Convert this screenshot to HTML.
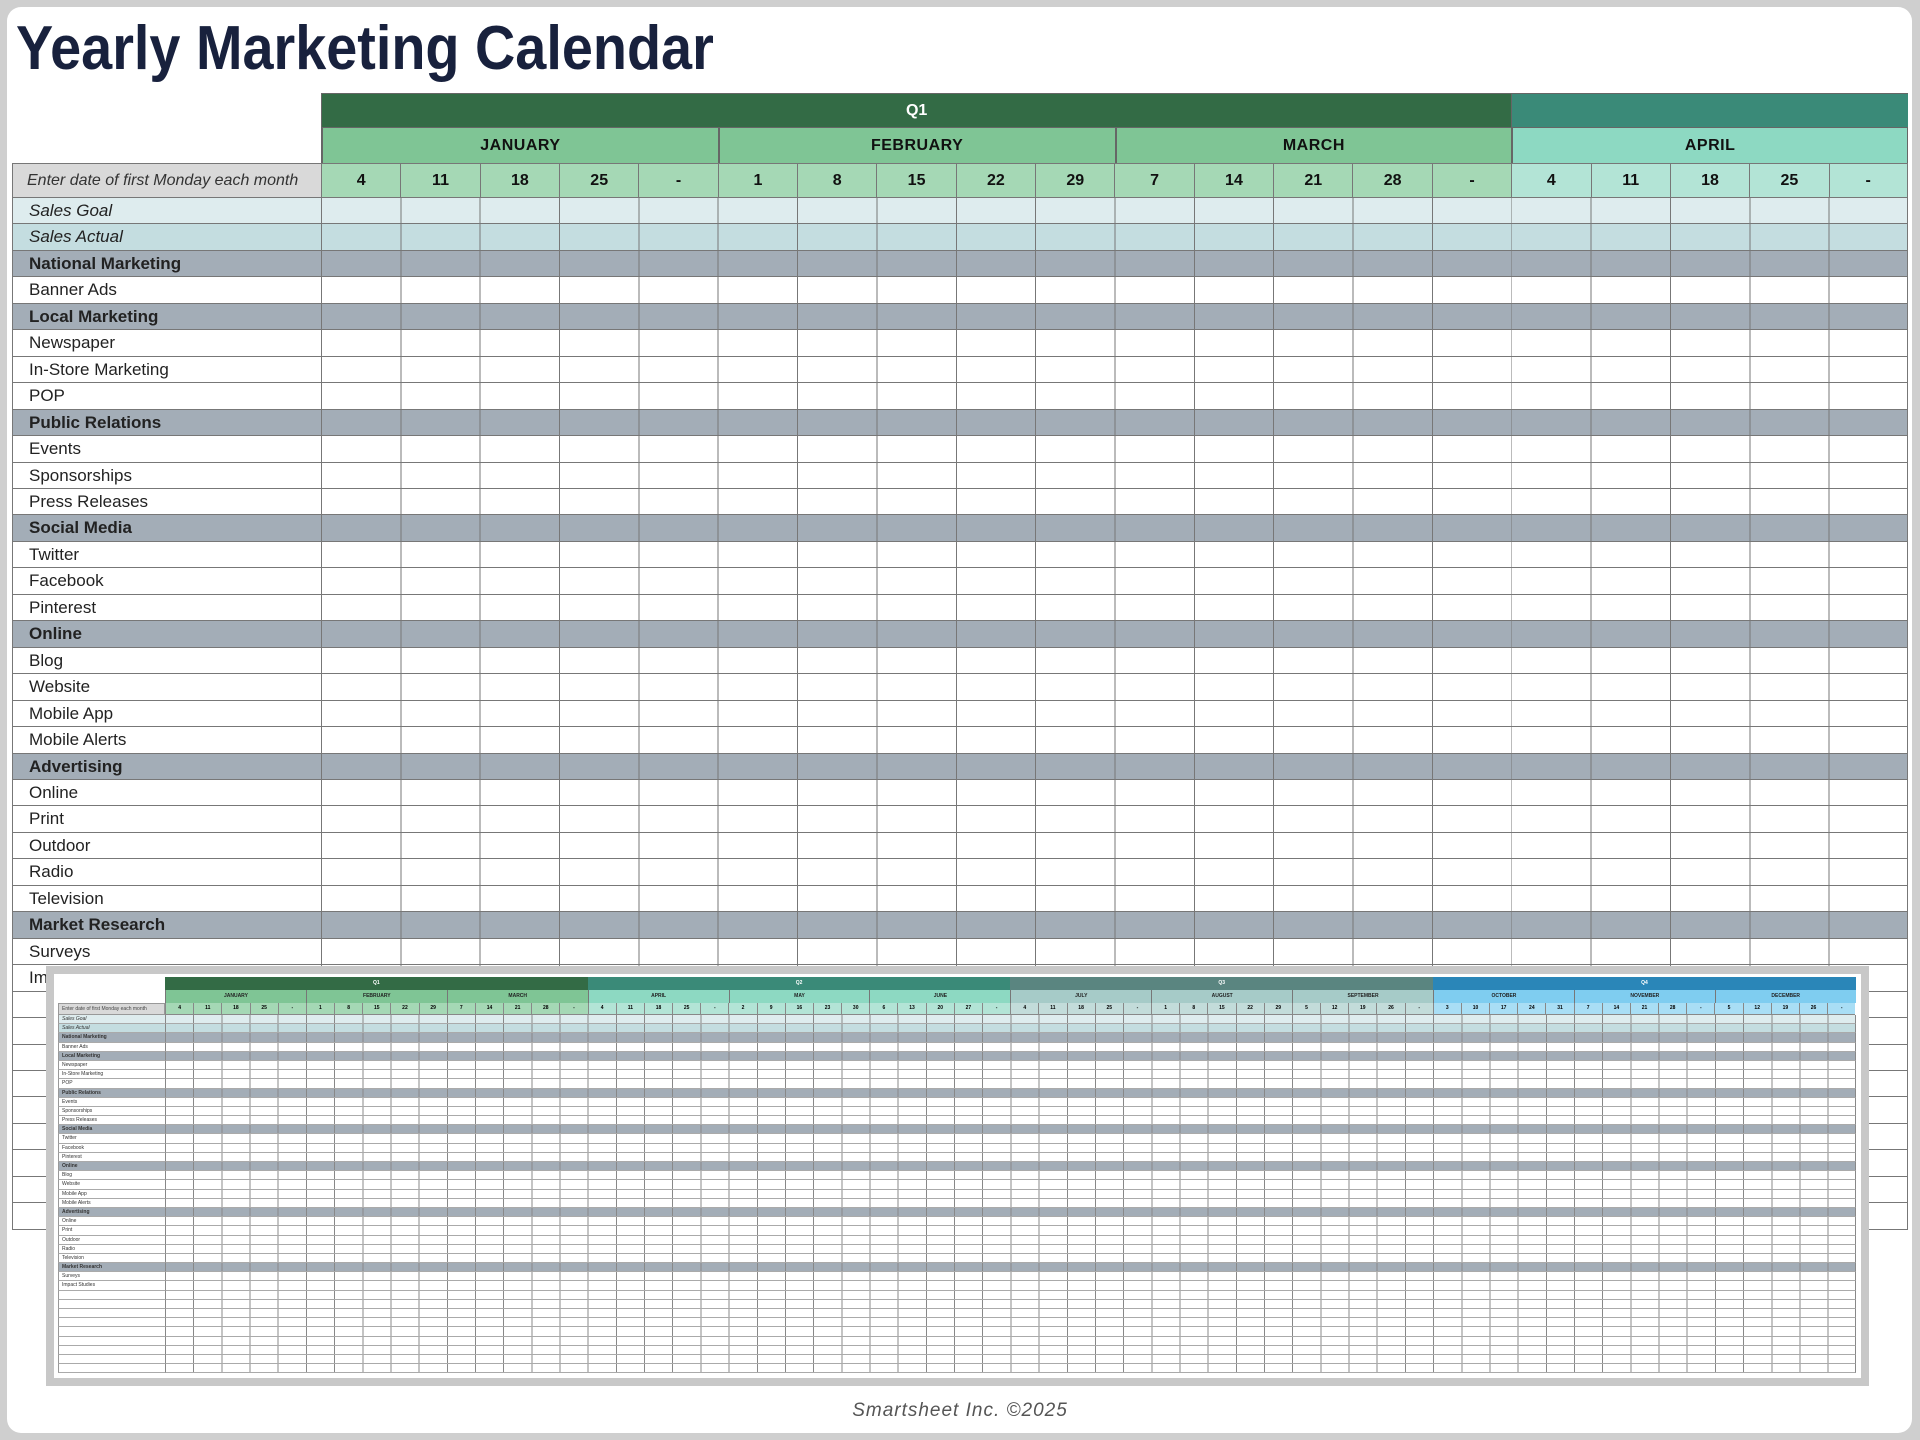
<!DOCTYPE html>
<html><head><meta charset="utf-8">
<style>
*{box-sizing:border-box;margin:0;padding:0}
html,body{width:1920px;height:1440px;overflow:hidden;background:#cfcfcf;font-family:"Liberation Sans",sans-serif}
.frame{position:absolute;left:7px;top:7px;width:1905px;height:1426px;background:#fff;border-radius:14px}
.title{position:absolute;left:16px;top:18px;font-size:62px;line-height:62px;font-weight:bold;color:#18213d;transform:scaleX(0.9);transform-origin:left top;white-space:nowrap}
.grid{position:absolute;left:12px;top:93px;width:1896px}
.r{display:flex;height:26.46px}
.r .l{width:309px;flex:none;border-left:1px solid #777;border-bottom:1px solid #777;font-size:17px;line-height:25px;padding-left:16px;color:#222;white-space:nowrap;overflow:hidden}
.r .c{flex:1;border-left:1px solid #777;border-bottom:1px solid #777;border-right:1px solid #777;background-image:repeating-linear-gradient(to right,transparent 0 78.35px,#777 78.35px 79.35px)}
.sg>div{background-color:#deecee}
.sa>div{background-color:#c4dde0}
.sec>div{background-color:#a3adb7}
.sec .l{font-weight:bold}
.sg .l,.sa .l{font-style:italic}
.hq{display:flex;height:34px}
.hq .l,.hm .l{width:309px;flex:none}
.q{color:#fff;font-weight:bold;font-size:16px;text-align:center;line-height:34px;border-top:1px solid #666;border-left:1px solid #666}
.hm{display:flex;height:36px}
.m{width:396.75px;flex:none;text-align:center;font-weight:bold;font-size:16px;letter-spacing:0.5px;line-height:36px;color:#111;border-left:2px solid #666;border-top:1px solid #666}
.hd{display:flex;height:35px}
.hd .l{width:309px;flex:none;background:#d9d9d9;font-style:italic;font-size:16px;line-height:33px;padding-left:14px;color:#333;border:1px solid #777;border-right:none;white-space:nowrap}
.d{width:79.35px;flex:none;text-align:center;font-weight:bold;font-size:16px;line-height:33px;color:#111;border-left:1px solid #777;border-top:1px solid #777;border-bottom:1px solid #777}
.g1{background:#a5d8b5}.g2{background:#b3e4d6}.g3{background:#c3dcda}.g4{background:#a9def5}
.overlay{position:absolute;left:46px;top:966px;width:1823px;height:420px;background:#fff;border:8px solid #c8c8c8}
.mini{position:absolute;left:4px;top:3px;width:1798px}
.mq{display:flex;height:13px}
.mq .l,.mm .l{width:107px;flex:none}
.mq div.q2{color:#fff;font-size:5px;font-weight:bold;text-align:center;line-height:13px}
.mm{display:flex;height:13px}
.mm .mo{width:140.9px;flex:none;font-size:5px;font-weight:bold;text-align:center;line-height:13px;color:#222;border-left:1px solid #777}
.md{display:flex;height:12px}
.md .l{width:107px;flex:none;background:#d9d9d9;font-size:5px;line-height:11px;padding-left:3px;color:#444;border:1px solid #999;white-space:nowrap;overflow:hidden}
.md .dd{width:28.18px;flex:none;font-size:5px;font-weight:bold;text-align:center;line-height:11px;border-left:1px solid #888;border-bottom:1px solid #888}
.mr{display:flex;height:9.2px}
.mr .l{width:107px;flex:none;font-size:5px;line-height:8px;padding-left:3px;color:#333;border-left:1px solid #999;border-bottom:1px solid #aaa;white-space:nowrap;overflow:hidden}
.mr .c{flex:1;border-bottom:1px solid #aaa;border-left:1px solid #888;border-right:1px solid #888;background-image:repeating-linear-gradient(to right,transparent 0 27.18px,#888 27.18px 28.18px)}
.mr.sec .l{font-weight:bold}
.foot{position:absolute;left:0;width:1920px;top:1400px;text-align:center;font-style:italic;font-size:19px;color:#555;letter-spacing:1px}
</style></head><body>
<div class="frame"></div>
<div class="title">Yearly Marketing Calendar</div>

<div class="grid">
 <div class="hq"><div class="l"></div><div class="q" style="width:1190.25px;background:#336b45">Q1</div><div class="q" style="width:396.75px;background:#3a8a78"></div></div>
 <div class="hm"><div class="l"></div><div class="m" style="background:#7fc595">JANUARY</div><div class="m" style="background:#7fc595">FEBRUARY</div><div class="m" style="background:#7fc595">MARCH</div><div class="m" style="background:#8dd9c2;border-right:1px solid #666">APRIL</div></div>
 <div class="hd"><div class="l">Enter date of first Monday each month</div>
  <div class="d g1">4</div><div class="d g1">11</div><div class="d g1">18</div><div class="d g1">25</div><div class="d g1">-</div>
  <div class="d g1">1</div><div class="d g1">8</div><div class="d g1">15</div><div class="d g1">22</div><div class="d g1">29</div>
  <div class="d g1">7</div><div class="d g1">14</div><div class="d g1">21</div><div class="d g1">28</div><div class="d g1">-</div>
  <div class="d g2">4</div><div class="d g2">11</div><div class="d g2">18</div><div class="d g2">25</div><div class="d g2" style="border-right:1px solid #777">-</div>
 </div>
 <div class="r sg"><div class="l">Sales Goal</div><div class="c"></div></div>
 <div class="r sa"><div class="l">Sales Actual</div><div class="c"></div></div>
 <div class="r sec"><div class="l">National Marketing</div><div class="c"></div></div>
 <div class="r"><div class="l">Banner Ads</div><div class="c"></div></div>
 <div class="r sec"><div class="l">Local Marketing</div><div class="c"></div></div>
 <div class="r"><div class="l">Newspaper</div><div class="c"></div></div>
 <div class="r"><div class="l">In-Store Marketing</div><div class="c"></div></div>
 <div class="r"><div class="l">POP</div><div class="c"></div></div>
 <div class="r sec"><div class="l">Public Relations</div><div class="c"></div></div>
 <div class="r"><div class="l">Events</div><div class="c"></div></div>
 <div class="r"><div class="l">Sponsorships</div><div class="c"></div></div>
 <div class="r"><div class="l">Press Releases</div><div class="c"></div></div>
 <div class="r sec"><div class="l">Social Media</div><div class="c"></div></div>
 <div class="r"><div class="l">Twitter</div><div class="c"></div></div>
 <div class="r"><div class="l">Facebook</div><div class="c"></div></div>
 <div class="r"><div class="l">Pinterest</div><div class="c"></div></div>
 <div class="r sec"><div class="l">Online</div><div class="c"></div></div>
 <div class="r"><div class="l">Blog</div><div class="c"></div></div>
 <div class="r"><div class="l">Website</div><div class="c"></div></div>
 <div class="r"><div class="l">Mobile App</div><div class="c"></div></div>
 <div class="r"><div class="l">Mobile Alerts</div><div class="c"></div></div>
 <div class="r sec"><div class="l">Advertising</div><div class="c"></div></div>
 <div class="r"><div class="l">Online</div><div class="c"></div></div>
 <div class="r"><div class="l">Print</div><div class="c"></div></div>
 <div class="r"><div class="l">Outdoor</div><div class="c"></div></div>
 <div class="r"><div class="l">Radio</div><div class="c"></div></div>
 <div class="r"><div class="l">Television</div><div class="c"></div></div>
 <div class="r sec"><div class="l">Market Research</div><div class="c"></div></div>
 <div class="r"><div class="l">Surveys</div><div class="c"></div></div>
 <div class="r"><div class="l">Impact Studies</div><div class="c"></div></div>
 <div class="r"><div class="l"></div><div class="c"></div></div>
 <div class="r"><div class="l"></div><div class="c"></div></div>
 <div class="r"><div class="l"></div><div class="c"></div></div>
 <div class="r"><div class="l"></div><div class="c"></div></div>
 <div class="r"><div class="l"></div><div class="c"></div></div>
 <div class="r"><div class="l"></div><div class="c"></div></div>
 <div class="r"><div class="l"></div><div class="c"></div></div>
 <div class="r"><div class="l"></div><div class="c"></div></div>
 <div class="r"><div class="l"></div><div class="c"></div></div>
</div>

<div class="overlay">
 <div class="mini">
  <div class="mq"><div class="l"></div>
   <div class="q2" style="width:422.7px;background:#336b45">Q1</div>
   <div class="q2" style="width:422.7px;background:#3a8a78">Q2</div>
   <div class="q2" style="width:422.7px;background:#5a8580">Q3</div>
   <div class="q2" style="width:422.7px;background:#2a86b8">Q4</div>
  </div>
  <div class="mm"><div class="l"></div>
   <div class="mo" style="background:#7fc595">JANUARY</div><div class="mo" style="background:#7fc595">FEBRUARY</div><div class="mo" style="background:#7fc595">MARCH</div>
   <div class="mo" style="background:#8dd9c2">APRIL</div><div class="mo" style="background:#8dd9c2">MAY</div><div class="mo" style="background:#8dd9c2">JUNE</div>
   <div class="mo" style="background:#a6cbc8">JULY</div><div class="mo" style="background:#a6cbc8">AUGUST</div><div class="mo" style="background:#a6cbc8">SEPTEMBER</div>
   <div class="mo" style="background:#7fcdf0">OCTOBER</div><div class="mo" style="background:#7fcdf0">NOVEMBER</div><div class="mo" style="background:#7fcdf0">DECEMBER</div>
  </div>
  <div class="md"><div class="l">Enter date of first Monday each month</div>
   <div class="dd g1">4</div><div class="dd g1">11</div><div class="dd g1">18</div><div class="dd g1">25</div><div class="dd g1">-</div>
   <div class="dd g1">1</div><div class="dd g1">8</div><div class="dd g1">15</div><div class="dd g1">22</div><div class="dd g1">29</div>
   <div class="dd g1">7</div><div class="dd g1">14</div><div class="dd g1">21</div><div class="dd g1">28</div><div class="dd g1">-</div>
   <div class="dd g2">4</div><div class="dd g2">11</div><div class="dd g2">18</div><div class="dd g2">25</div><div class="dd g2">-</div>
   <div class="dd g2">2</div><div class="dd g2">9</div><div class="dd g2">16</div><div class="dd g2">23</div><div class="dd g2">30</div>
   <div class="dd g2">6</div><div class="dd g2">13</div><div class="dd g2">20</div><div class="dd g2">27</div><div class="dd g2">-</div>
   <div class="dd g3">4</div><div class="dd g3">11</div><div class="dd g3">18</div><div class="dd g3">25</div><div class="dd g3">-</div>
   <div class="dd g3">1</div><div class="dd g3">8</div><div class="dd g3">15</div><div class="dd g3">22</div><div class="dd g3">29</div>
   <div class="dd g3">5</div><div class="dd g3">12</div><div class="dd g3">19</div><div class="dd g3">26</div><div class="dd g3">-</div>
   <div class="dd g4">3</div><div class="dd g4">10</div><div class="dd g4">17</div><div class="dd g4">24</div><div class="dd g4">31</div>
   <div class="dd g4">7</div><div class="dd g4">14</div><div class="dd g4">21</div><div class="dd g4">28</div><div class="dd g4">-</div>
   <div class="dd g4">5</div><div class="dd g4">12</div><div class="dd g4">19</div><div class="dd g4">26</div><div class="dd g4">-</div>
  </div>
  <div class="mr sg"><div class="l">Sales Goal</div><div class="c"></div></div>
  <div class="mr sa"><div class="l">Sales Actual</div><div class="c"></div></div>
  <div class="mr sec"><div class="l">National Marketing</div><div class="c"></div></div>
  <div class="mr"><div class="l">Banner Ads</div><div class="c"></div></div>
  <div class="mr sec"><div class="l">Local Marketing</div><div class="c"></div></div>
  <div class="mr"><div class="l">Newspaper</div><div class="c"></div></div>
  <div class="mr"><div class="l">In-Store Marketing</div><div class="c"></div></div>
  <div class="mr"><div class="l">POP</div><div class="c"></div></div>
  <div class="mr sec"><div class="l">Public Relations</div><div class="c"></div></div>
  <div class="mr"><div class="l">Events</div><div class="c"></div></div>
  <div class="mr"><div class="l">Sponsorships</div><div class="c"></div></div>
  <div class="mr"><div class="l">Press Releases</div><div class="c"></div></div>
  <div class="mr sec"><div class="l">Social Media</div><div class="c"></div></div>
  <div class="mr"><div class="l">Twitter</div><div class="c"></div></div>
  <div class="mr"><div class="l">Facebook</div><div class="c"></div></div>
  <div class="mr"><div class="l">Pinterest</div><div class="c"></div></div>
  <div class="mr sec"><div class="l">Online</div><div class="c"></div></div>
  <div class="mr"><div class="l">Blog</div><div class="c"></div></div>
  <div class="mr"><div class="l">Website</div><div class="c"></div></div>
  <div class="mr"><div class="l">Mobile App</div><div class="c"></div></div>
  <div class="mr"><div class="l">Mobile Alerts</div><div class="c"></div></div>
  <div class="mr sec"><div class="l">Advertising</div><div class="c"></div></div>
  <div class="mr"><div class="l">Online</div><div class="c"></div></div>
  <div class="mr"><div class="l">Print</div><div class="c"></div></div>
  <div class="mr"><div class="l">Outdoor</div><div class="c"></div></div>
  <div class="mr"><div class="l">Radio</div><div class="c"></div></div>
  <div class="mr"><div class="l">Television</div><div class="c"></div></div>
  <div class="mr sec"><div class="l">Market Research</div><div class="c"></div></div>
  <div class="mr"><div class="l">Surveys</div><div class="c"></div></div>
  <div class="mr"><div class="l">Impact Studies</div><div class="c"></div></div>
  <div class="mr"><div class="l"></div><div class="c"></div></div>
  <div class="mr"><div class="l"></div><div class="c"></div></div>
  <div class="mr"><div class="l"></div><div class="c"></div></div>
  <div class="mr"><div class="l"></div><div class="c"></div></div>
  <div class="mr"><div class="l"></div><div class="c"></div></div>
  <div class="mr"><div class="l"></div><div class="c"></div></div>
  <div class="mr"><div class="l"></div><div class="c"></div></div>
  <div class="mr"><div class="l"></div><div class="c"></div></div>
  <div class="mr"><div class="l"></div><div class="c"></div></div>
 </div>
</div>

<div class="foot">Smartsheet Inc. ©2025</div>
</body></html>
